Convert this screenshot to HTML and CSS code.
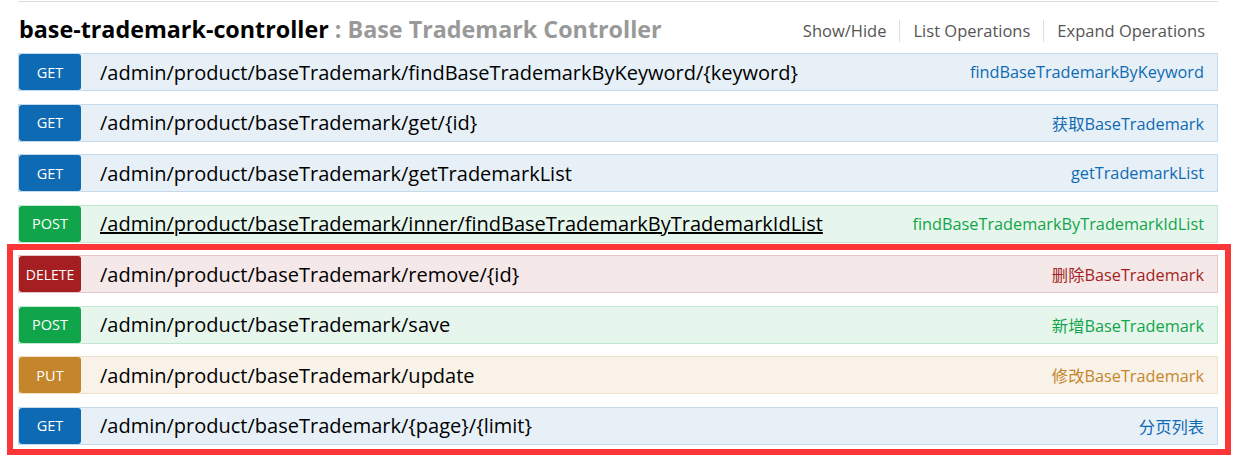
FILE: index.html
```html
<!DOCTYPE html>
<html>
<head>
<meta charset="utf-8">
<link rel="stylesheet" href="styles.css">
</head>
<body>
<div class="resource">
  <div class="heading">
    <h2><a class="name">base-trademark-controller</a> <span class="desc">: Base Trademark Controller</span></h2>
    <ul class="options">
      <li><a>Show/Hide</a></li>
      <li><a>List Operations</a></li>
      <li class="last"><a>Expand Operations</a></li>
    </ul>
  </div>
  <ul class="endpoints">
    <li class="op get"><span class="method">GET</span><span class="path">/admin/product/baseTrademark/findBaseTrademarkByKeyword/{keyword}</span><span class="summary">findBaseTrademarkByKeyword</span></li>
    <li class="op get"><span class="method">GET</span><span class="path">/admin/product/baseTrademark/get/{id}</span><span class="summary">获取BaseTrademark</span></li>
    <li class="op get"><span class="method">GET</span><span class="path">/admin/product/baseTrademark/getTrademarkList</span><span class="summary">getTrademarkList</span></li>
    <li class="op post"><span class="method">POST</span><span class="path underline">/admin/product/baseTrademark/inner/findBaseTrademarkByTrademarkIdList</span><span class="summary">findBaseTrademarkByTrademarkIdList</span></li>
    <li class="op delete"><span class="method">DELETE</span><span class="path">/admin/product/baseTrademark/remove/{id}</span><span class="summary">删除BaseTrademark</span></li>
    <li class="op post"><span class="method">POST</span><span class="path">/admin/product/baseTrademark/save</span><span class="summary">新增BaseTrademark</span></li>
    <li class="op put"><span class="method">PUT</span><span class="path">/admin/product/baseTrademark/update</span><span class="summary">修改BaseTrademark</span></li>
    <li class="op get"><span class="method">GET</span><span class="path">/admin/product/baseTrademark/{page}/{limit}</span><span class="summary">分页列表</span></li>
  </ul>
  <div class="highlight"></div>
</div>
</body>
</html>
```

FILE: styles.css
```css
* { box-sizing: border-box; }
html, body { margin: 0; padding: 0; background: #fff; }
body {
  font-family: "Open Sans", "Noto Sans", "Noto Sans CJK SC", sans-serif;
  color: #000;
}
.resource {
  position: relative;
  margin: 1px 0 0 18px;
  width: 1200px;
  border-top: 1px solid #ddd;
}
.heading {
  height: 51px;
  display: flex;
  align-items: center;
  justify-content: space-between;
  padding-top: 3px;
}
.heading h2 {
  margin: 0 0 0 1px;
  font-size: 23.3px;
  font-weight: 700;
  letter-spacing: 0;
}
.heading .name { color: #000; }
.heading .desc { color: #999; }
.options {
  list-style: none;
  margin: 0;
  padding: 3px 13px 0 0;
  display: flex;
  font-size: 16.5px;
  color: #555;
}
.options li {
  padding: 0 13px;
  border-right: 1px solid #ddd;
  line-height: 22px;
}
.options li.last { border-right: none; padding-right: 0; }
.endpoints {
  list-style: none;
  margin: 0;
  padding: 0;
}
.op {
  display: flex;
  align-items: center;
  height: 38px;
  border: 1px solid;
  margin-bottom: 12.5px;
  padding-right: 13px;
}
.method {
  width: 62px;
  height: 36px;
  border-radius: 3px;
  color: #fff;
  font-size: 14.5px;
  display: flex;
  align-items: center;
  justify-content: center;
  flex: none;
}
.path {
  margin-left: 19px;
  font-size: 20px;
  flex: 1;
  white-space: nowrap;
}
.path.underline { text-decoration: underline; }
.summary {
  font-size: 16.3px;
  white-space: nowrap;
}
.get { background: #e7f0f7; border-color: #c3d9ec; }
.get .method { background: #0f6ab4; }
.get .summary { color: #0f6ab4; }
.post { background: #e7f6ec; border-color: #c3e8d1; }
.post .method { background: #10a54a; }
.post .summary { color: #10a54a; }
.delete { background: #f5e8e8; border-color: #e8c6c7; }
.delete .method { background: #a41e22; font-size: 14px; }
.delete .summary { color: #a41e22; }
.put { background: #f9f2e9; border-color: #f0e0ca; }
.put .method { background: #c5862b; }
.put .summary { color: #c5862b; }
.highlight {
  position: absolute;
  left: -11px;
  top: 242px;
  width: 1224px;
  height: 211px;
  border: 6px solid #fa3636;
  pointer-events: none;
}
```
